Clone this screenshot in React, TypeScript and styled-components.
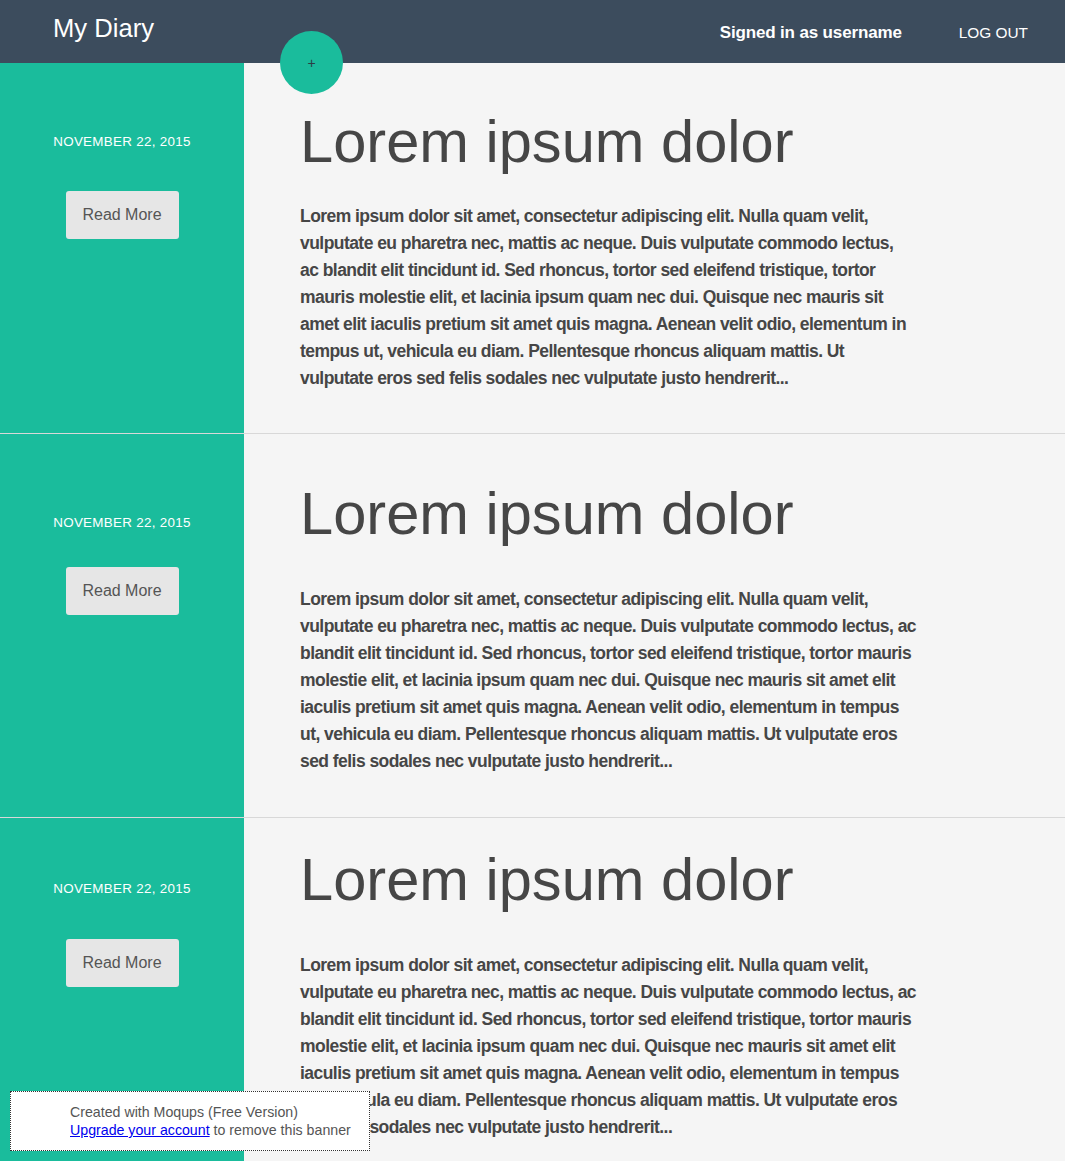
import styled, { createGlobalStyle } from 'styled-components';

const GlobalStyle = createGlobalStyle`
    body {
        margin: 0;
        background: #f5f5f5;
        font-family: "Liberation Sans", Arial, sans-serif;
    }
`;

const Header = styled.header`
    position: relative;
    height: 63px;
    background-color: #3c4c5d;
    display: flex;
    align-items: center;
    padding: 0 37px 0 53px;
    color: #fff;
`;

const Logo = styled.h1`
    margin: 0;
    margin-right: auto;
    font-size: 25.6px;
    font-weight: normal;
    position: relative;
    top: -3px;
`;

const SignedIn = styled.span`
    font-size: 17px;
    font-weight: bold;
    letter-spacing: -0.15px;
    margin-right: 57px;
    position: relative;
    top: 1px;
`;

const LogOut = styled.a`
    font-size: 15.4px;
    color: #fff;
    text-decoration: none;
    cursor: pointer;
    position: relative;
    top: 1px;
`;

const AddButton = styled.button`
    position: absolute;
    left: 280px;
    top: 31px;
    width: 63px;
    height: 63px;
    border-radius: 50%;
    border: none;
    background-color: #1abc9c;
    color: #2c3e44;
    font-family: "Liberation Sans", Arial, sans-serif;
    font-size: 14px;
    padding: 0;
    cursor: pointer;
    z-index: 2;
`;

const Row = styled.article`
    display: grid;
    grid-template-columns: 244px 1fr;
    border-bottom: 1px solid #d8d8d8;

    &:last-child {
        border-bottom: none;
    }
`;

const Side = styled.aside<{ $top: number; $gap: number }>`
    background-color: #1abc9c;
    display: flex;
    flex-direction: column;
    align-items: center;
    padding-top: ${p => p.$top}px;
    gap: ${p => p.$gap}px;
`;

const DateLabel = styled.p`
    margin: 0;
    color: #fff;
    font-size: 13.4px;
    line-height: 16px;
    letter-spacing: 0.3px;
`;

const ReadMore = styled.button`
    width: 113px;
    height: 48px;
    border: none;
    border-radius: 3px;
    background-color: #e6e6e6;
    color: #555;
    font-family: "Liberation Sans", Arial, sans-serif;
    font-size: 16px;
    cursor: pointer;
`;

const Main = styled.div<{ $top: number; $gap: number; $bottom: number; $width: number }>`
    padding: ${p => p.$top}px 0 ${p => p.$bottom}px 56px;
    color: #464646;

    h2 {
        margin: 0 0 ${p => p.$gap}px;
        font-size: 59.6px;
        font-weight: normal;
        line-height: 70px;
    }

    p {
        margin: 0;
        max-width: ${p => p.$width}px;
        font-size: 17.5px;
        font-weight: bold;
        letter-spacing: -0.55px;
        line-height: 27px;
    }
`;

const Banner = styled.div`
    position: fixed;
    left: 10px;
    bottom: 10px;
    width: 299px;
    height: 58px;
    padding-left: 59px;
    background: #fff;
    border: 1px dotted #333;
    display: flex;
    flex-direction: column;
    justify-content: center;
    font-size: 14.2px;
    line-height: 18px;
    color: #555;
    white-space: nowrap;
    z-index: 5;

    a {
        color: #00e;
        text-decoration: underline;
    }
`;

const body =
    'Lorem ipsum dolor sit amet, consectetur adipiscing elit. Nulla quam velit, vulputate eu pharetra nec, mattis ac neque. Duis vulputate commodo lectus, ac blandit elit tincidunt id. Sed rhoncus, tortor sed eleifend tristique, tortor mauris molestie elit, et lacinia ipsum quam nec dui. Quisque nec mauris sit amet elit iaculis pretium sit amet quis magna. Aenean velit odio, elementum in tempus ut, vehicula eu diam. Pellentesque rhoncus aliquam mattis. Ut vulputate eros sed felis sodales nec vulputate justo hendrerit...';

const entries = [
    { side: 71, sideGap: 41, top: 44, gap: 26, bottom: 41, width: 610 },
    { side: 81, sideGap: 36, top: 45, gap: 37, bottom: 42, width: 620 },
    { side: 63, sideGap: 42, top: 27, gap: 37, bottom: 42, width: 620 },
];

export default function App() {
    return (
        <>
            <GlobalStyle />
            <Header>
                <Logo>My Diary</Logo>
                <SignedIn>Signed in as username</SignedIn>
                <LogOut>LOG OUT</LogOut>
                <AddButton>+</AddButton>
            </Header>
            {entries.map((e, i) => (
                <Row key={i}>
                    <Side $top={e.side} $gap={e.sideGap}>
                        <DateLabel>NOVEMBER 22, 2015</DateLabel>
                        <ReadMore>Read More</ReadMore>
                    </Side>
                    <Main $top={e.top} $gap={e.gap} $bottom={e.bottom} $width={e.width}>
                        <h2>Lorem ipsum dolor</h2>
                        <p>{body}</p>
                    </Main>
                </Row>
            ))}
            <Banner>
                <span>Created with Moqups (Free Version)</span>
                <span>
                    <a href="#">Upgrade your account</a> to remove this banner
                </span>
            </Banner>
        </>
    );
}
